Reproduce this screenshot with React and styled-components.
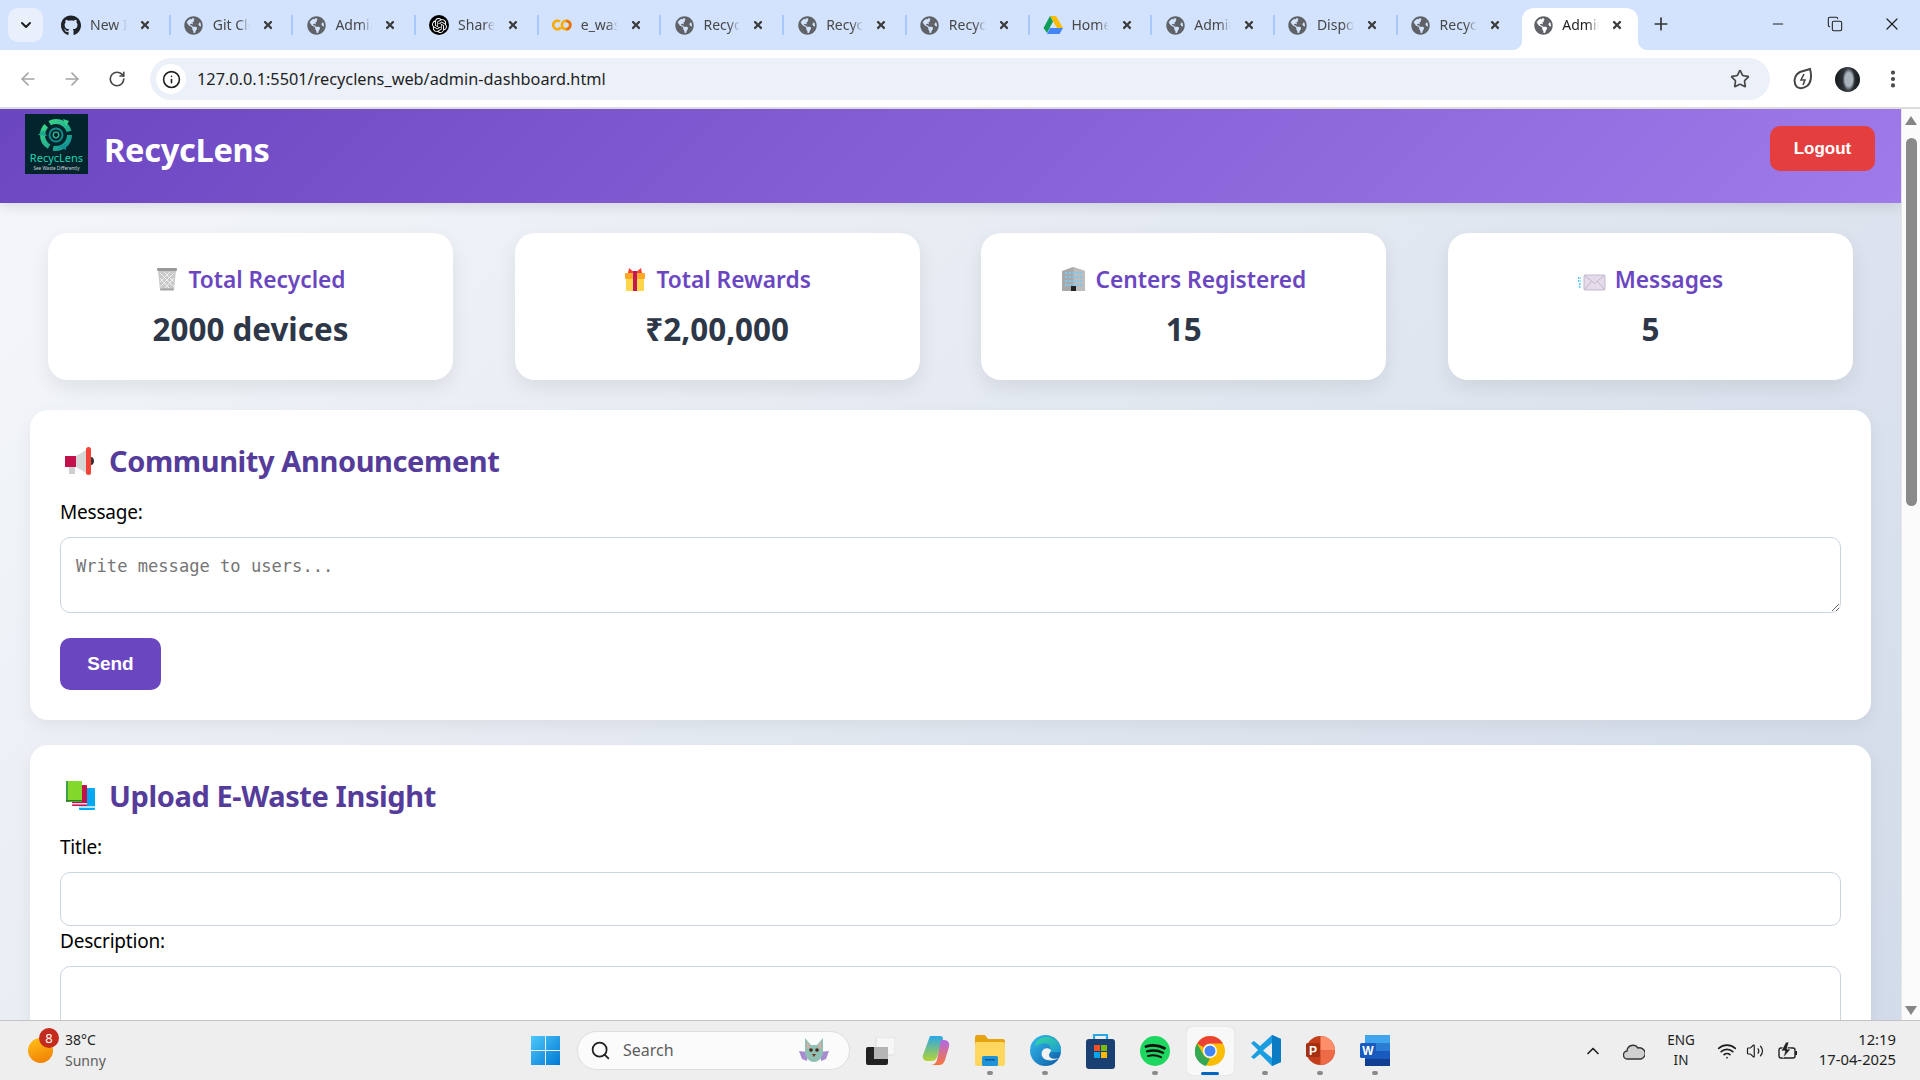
import styled, { createGlobalStyle } from "styled-components";
import { FaGithub, FaGlobeAmericas, FaTimes } from "react-icons/fa";
import { SiOpenai } from "react-icons/si";
import {
  Minus,
  Copy,
  X,
  Plus,
  Info,
  Star,
  ChevronDown,
  ChevronUp,
  Search as SearchGlyph,
  EllipsisVertical,
  Wifi,
  Volume2,
  ArrowLeft,
  ArrowRight,
  RotateCw,
} from "lucide-react";

const GlobalStyle = createGlobalStyle`
  html, body {
    margin: 0;
    padding: 0;
    height: 100%;
    overflow: hidden;
  }
  * {
    box-sizing: border-box;
  }
`;

const uiFont = `"Noto Sans", "Open Sans", sans-serif`;

// Browser frame
const Screen = styled.div`
  display: flex;
  flex-direction: column;
  width: 1920px;
  height: 1080px;
  overflow: hidden;
  font-family: ${uiFont};
`;

const TabStrip = styled.div`
  display: flex;
  align-items: flex-start;
  height: 50px;
  flex-shrink: 0;
  background: #d3e3fd;
`;

const TabMenu = styled.div`
  display: flex;
  align-items: center;
  justify-content: center;
  width: 35px;
  height: 34px;
  margin: 8px 4px 0 8px;
  border-radius: 10px;
  background: #e9f0fc;
  color: #1f1f1f;
`;

const Tab = styled.div`
  position: relative;
  display: flex;
  align-items: center;
  width: 122.7px;
  height: 42px;
  margin-top: 8px;
  padding-left: 14px;
  color: ${(p) => (p.$active ? "#1f1f1f" : "#474747")};
  background: ${(p) => (p.$active ? "#ffffff" : "transparent")};
  border-radius: 12px 12px 0 0;
  ${(p) => p.$active && "width: 116px; margin-left: 3px; padding-left: 11px;"}

  &::before {
    content: "";
    display: ${(p) => (p.$divider ? "block" : "none")};
    position: absolute;
    left: -1px;
    top: 7px;
    width: 2px;
    height: 20px;
    background: #a8c7fa;
  }
`;

const Flare = styled.span`
  position: absolute;
  bottom: 0;
  ${(p) => (p.$side === "left" ? "left: -10px;" : "right: -10px;")}
  width: 10px;
  height: 10px;
  background: radial-gradient(
    circle at ${(p) => (p.$side === "left" ? "0 0" : "100% 0")},
    transparent 10px,
    #ffffff 10.5px
  );
`;

const TabIcon = styled.span`
  display: flex;
  align-items: center;
  justify-content: center;
  width: 20px;
  height: 20px;
  flex-shrink: 0;
  margin-bottom: 8px;
  color: #5f6368;
`;

const OpenAiBadge = styled.span`
  display: flex;
  align-items: center;
  justify-content: center;
  width: 20px;
  height: 20px;
  border-radius: 50%;
  background: #000000;
  color: #ffffff;
`;

const TabTitle = styled.span`
  width: 37px;
  margin: 0 0 8px 9px;
  font-size: 14px;
  line-height: 20px;
  white-space: nowrap;
  overflow: hidden;
  -webkit-mask-image: linear-gradient(90deg, #000 70%, transparent);
  mask-image: linear-gradient(90deg, #000 70%, transparent);
`;

const TabClose = styled.span`
  display: flex;
  margin: 0 0 8px 12px;
  color: #3c3c3c;
`;

const NewTab = styled.div`
  display: flex;
  margin: 14px 0 0 13px;
  color: #333;
`;

const WindowControls = styled.div`
  display: flex;
  margin-left: auto;
`;

const WindowButton = styled.div`
  display: flex;
  align-items: center;
  justify-content: center;
  width: 57px;
  height: 48px;
  color: #222;
`;

const Toolbar = styled.div`
  display: flex;
  align-items: center;
  height: 59px;
  flex-shrink: 0;
  padding: 1px 0 0 6px;
  background: #ffffff;
  border-bottom: 2px solid #dcdcdc;
  border-radius: 10px 10px 0 0;
`;

const NavButton = styled.div`
  display: flex;
  align-items: center;
  justify-content: center;
  width: ${(p) => p.$width || 44}px;
  color: ${(p) => (p.$muted ? "#a3a5a8" : "#474747")};
`;

const AddressBar = styled.div`
  display: flex;
  align-items: center;
  width: 1620px;
  height: 42px;
  margin: 0 10px 0 10px;
  padding-left: 6px;
  background: #ebf0f9;
  border-radius: 21px;
`;

const InfoBadge = styled.span`
  display: flex;
  align-items: center;
  justify-content: center;
  width: 30px;
  height: 30px;
  border-radius: 50%;
  background: #ffffff;
  color: #1f1f1f;
`;

const UrlText = styled.span`
  margin-left: 11px;
  font-size: 16.3px;
  color: #1f1f1f;
`;

const StarSlot = styled.span`
  display: flex;
  margin-left: auto;
  margin-right: 20px;
  color: #474747;
`;

const ToolButton = styled.div`
  display: flex;
  align-items: center;
  justify-content: center;
  width: 45px;
  color: #474747;
`;

const Avatar = styled.div`
  width: 25px;
  height: 25px;
  border-radius: 50%;
  background: radial-gradient(ellipse 25% 45% at 55% 50%, #a9b3bc 0 60%, transparent 100%),
    linear-gradient(90deg, #15181b, #3a4046 50%, #15181b);
`;

const Viewport = styled.div`
  display: flex;
  height: 911px;
  flex-shrink: 0;
  overflow: hidden;
`;

const Scrollbar = styled.div`
  display: flex;
  flex-direction: column;
  align-items: center;
  width: 19px;
  height: 100%;
  background: #fbfbfb;
  border-left: 1px solid #e6e6e6;
`;

const ScrollArrow = styled.div`
  width: 0;
  height: 0;
  border-left: 6px solid transparent;
  border-right: 6px solid transparent;
  ${(p) =>
    p.$down
      ? "border-top: 9px solid #858585; margin-top: auto; margin-bottom: 5px;"
      : "border-bottom: 9px solid #858585; margin-top: 7px;"}
`;

const ScrollThumb = styled.div`
  width: 11px;
  height: 368px;
  margin-top: 13px;
  border-radius: 6px;
  background: #8a8a8a;
`;

// Dashboard page
const Page = styled.div`
  flex: 1;
  min-width: 0;
  height: 2150px;
  background: linear-gradient(135deg, #f5f7fa, #c3cfe2);
  font-family: ${uiFont};
`;

const Header = styled.header`
  display: flex;
  align-items: flex-start;
  justify-content: space-between;
  height: 94px;
  padding: 5px 26px 0 25px;
  background: linear-gradient(135deg, #6b46c1, #9f7aea);
  box-shadow: 0 4px 12px rgba(0, 0, 0, 0.1);
`;

const Brand = styled.div`
  display: flex;
  align-items: flex-start;
`;

const Logo = styled.svg`
  display: block;
  width: 63px;
  height: 60px;
`;

const BrandName = styled.h1`
  margin: 14px 0 0 16px;
  font-size: 32.6px;
  line-height: 44px;
  font-weight: 700;
  color: #ffffff;
  letter-spacing: -0.3px;
`;

const LogoutButton = styled.button`
  width: 105px;
  height: 45px;
  margin-top: 12px;
  border: none;
  border-radius: 10px;
  background: #e53e3e;
  color: #ffffff;
  font-family: "Liberation Sans", Arial, sans-serif;
  font-size: 17px;
  font-weight: 700;
`;

const StatsRow = styled.div`
  display: grid;
  grid-template-columns: repeat(4, 405px);
  justify-content: space-between;
  padding: 30px 48px 0;
`;

const StatCard = styled.div`
  height: 147px;
  padding-top: 28px;
  background: #ffffff;
  border-radius: 20px;
  box-shadow: 0 8px 20px rgba(0, 0, 0, 0.08);
  text-align: center;
`;

const StatTitle = styled.div`
  display: flex;
  align-items: center;
  justify-content: center;
  gap: 9px;
  height: 36px;
  font-size: 22.7px;
  font-weight: 600;
  color: #6b46c1;
`;

const StatValue = styled.div`
  margin-top: 12px;
  font-size: 31.4px;
  line-height: 40px;
  font-weight: 700;
  color: #2d3748;
`;

const Section = styled.section`
  margin: ${(p) => (p.$first ? "30px" : "25px")} 30px 0;
  padding: 32px 30px 30px;
  background: #ffffff;
  border-radius: 18px;
  box-shadow: 0 6px 18px rgba(0, 0, 0, 0.06);
`;

const SectionTitle = styled.h2`
  display: flex;
  align-items: center;
  gap: 14px;
  height: 40px;
  margin: 0 0 17px;
  padding: 0 0 3px 5px;
  font-size: 29px;
  font-weight: 700;
  color: #553c9a;
  letter-spacing: -0.4px;
`;

const FieldLabel = styled.label`
  display: block;
  margin-top: ${(p) => p.$gap || 0}px;
  font-size: 19px;
  line-height: 26px;
  color: #000000;
  letter-spacing: -0.2px;
`;

const MessageBox = styled.textarea`
  display: block;
  width: 100%;
  height: ${(p) => p.$height}px;
  margin-top: 12px;
  padding: 18px 15px 10px;
  border: 1px solid #cbd5e0;
  border-radius: 10px;
  background: #ffffff;
  font-family: "DejaVu Sans Mono", monospace;
  font-size: 17.1px;
  outline: none;

  &::placeholder {
    color: #757575;
  }
`;

const TextField = styled.input`
  display: block;
  width: 100%;
  height: 54px;
  margin-top: 12px;
  border: 1px solid #cbd5e0;
  border-radius: 10px;
  background: #ffffff;
`;

const SendButton = styled.button`
  display: block;
  width: 101px;
  height: 52px;
  margin-top: 25px;
  border: none;
  border-radius: 10px;
  background: #6b46c1;
  color: #ffffff;
  font-family: "Liberation Sans", Arial, sans-serif;
  font-size: 19px;
  font-weight: 700;
`;

// Windows taskbar
const Taskbar = styled.div`
  display: flex;
  align-items: center;
  height: 60px;
  flex-shrink: 0;
  background: #eeeeee;
  border-top: 1px solid #c4c4c4;
  font-family: "Noto Sans", sans-serif;
`;

const WeatherZone = styled.div`
  position: relative;
  display: flex;
  align-items: center;
  width: 517.5px;
  padding-left: 28px;
`;

const SunDot = styled.div`
  width: 25px;
  height: 25px;
  border-radius: 50%;
  background: linear-gradient(160deg, #ffc21a, #f07a00);
`;

const AlertBadge = styled.span`
  position: absolute;
  left: 39px;
  top: -1px;
  width: 20px;
  height: 20px;
  border-radius: 50%;
  background: #c42b1c;
  color: #fff;
  font-size: 13px;
  line-height: 20px;
  text-align: center;
`;

const WeatherText = styled.div`
  margin: 0 0 2px 12px;
  font-size: 14px;
  line-height: 21px;
  color: #1f1f1f;
  span {
    display: block;
    color: #5d5d5d;
  }
`;

const TaskSlot = styled.div`
  position: relative;
  display: flex;
  align-items: center;
  justify-content: center;
  width: 55px;
  height: 48px;

  &::before {
    content: "";
    display: ${(p) => (p.$active ? "block" : "none")};
    position: absolute;
    left: 4px;
    right: 4px;
    top: 0;
    bottom: 0;
    background: #f8f8f8;
    border-radius: 5px;
    box-shadow: 0 0 1px rgba(0, 0, 0, 0.2);
  }

  svg {
    position: relative;
  }
`;

const RunDot = styled.span`
  position: absolute;
  left: 50%;
  bottom: 0;
  width: ${(p) => (p.$active ? "18px" : "6px")};
  height: ${(p) => (p.$active ? "3px" : "4px")};
  margin-left: ${(p) => (p.$active ? "-9px" : "-3px")};
  border-radius: 2px;
  background: ${(p) => (p.$active ? "#0067c0" : "#8a8a8a")};
`;

const SearchPill = styled.div`
  display: flex;
  align-items: center;
  width: 273px;
  height: 39px;
  margin: 0 2.5px 0 4.5px;
  padding: 0 19px 0 12px;
  border: 1px solid #dedede;
  border-radius: 20px;
  background: #fbfbfb;
  color: #1f1f1f;
`;

const SearchLabel = styled.span`
  margin: 0 0 2px 12px;
  font-size: 16px;
  color: #5d5d5d;
`;

const BatSlot = styled.span`
  display: flex;
  margin-left: auto;
`;

const Tray = styled.div`
  display: flex;
  align-items: center;
  margin-left: auto;
  padding-right: 24px;
  color: #1f1f1f;
`;

const TraySlot = styled.div`
  display: flex;
  align-items: center;
  justify-content: center;
  width: ${(p) => p.$width}px;
`;

const LangText = styled.div`
  width: 54px;
  margin-bottom: 1px;
  font-size: 13.5px;
  line-height: 20px;
  text-align: center;
`;

const ClockText = styled.div`
  width: 84px;
  margin-bottom: 3px;
  font-size: 14.8px;
  line-height: 20px;
  text-align: right;
  white-space: nowrap;
`;

// Inline drawings
const ColabIcon = () => (
  <svg width="22" height="14" viewBox="0 0 22 14">
    <circle cx="6" cy="7" r="4.6" fill="none" stroke="#f9ab00" strokeWidth="3" strokeDasharray="21 8" transform="rotate(35 6 7)" />
    <circle cx="15.5" cy="7" r="4.6" fill="none" stroke="#f9ab00" strokeWidth="3" />
    <path d="M15.5 2.4a4.6 4.6 0 0 1 0 9.2" fill="none" stroke="#e8710a" strokeWidth="3" />
  </svg>
);

const DriveIcon = () => (
  <svg width="20" height="18" viewBox="0 0 20 18">
    <path d="M7 0h6l7 12h-6z" fill="#fbbc04" />
    <path d="M7 0l3 5.5L4 17 0.5 12z" fill="#0f9d58" />
    <path d="M4 18l3-6h13l-3.5 6z" fill="#4285f4" />
  </svg>
);

const LogoMark = () => (
  <Logo viewBox="0 0 63 60">
    <defs>
      <linearGradient id="logoRing" x1="0" y1="0" x2="1" y2="1">
        <stop offset="0" stopColor="#3ddc84" />
        <stop offset="1" stopColor="#0f8f95" />
      </linearGradient>
    </defs>
    <rect width="63" height="60" fill="#02242c" />
    <circle cx="31" cy="21" r="13.5" fill="none" stroke="url(#logoRing)" strokeWidth="5" strokeDasharray="24 4.3" />
    <path d="M13 21l5-5 4 6z" fill="#1aa68f" />
    <path d="M38 5l6 2-3 5z" fill="#37d08a" />
    <path d="M41 36l-6-3 6-3z" fill="#118f95" />
    <circle cx="31" cy="21" r="6.5" fill="none" stroke="#0e8c8a" strokeWidth="2" />
    <circle cx="31" cy="21" r="2.8" fill="none" stroke="#38b99a" strokeWidth="1.3" />
    <text x="31.5" y="48" fontSize="11" textAnchor="middle" fill="#22d3b2" fontFamily="Noto Sans, sans-serif">RecycLens</text>
    <text x="31.5" y="56" fontSize="4.6" textAnchor="middle" fill="#cfd8d8" fontFamily="Noto Sans, sans-serif">See Waste Differently</text>
  </Logo>
);

const BasketEmoji = () => (
  <svg width="24" height="24" viewBox="0 0 24 24">
    <path d="M3 3h18l-2 20H5z" fill="#c9c9c9" />
    <path d="M5 6l14 14M9 5l10 10M5 11l9 10M19 6L5 20M15 5L5 15M19 11l-9 10" stroke="#f1f1f1" strokeWidth="1" />
    <rect x="2" y="1" width="20" height="3" rx="1" fill="#9a9a9a" />
    <rect x="5" y="21.5" width="14" height="2" rx="1" fill="#a5a5a5" />
  </svg>
);

const GiftEmoji = () => (
  <svg width="24" height="24" viewBox="0 0 24 24">
    <rect x="3" y="9" width="18" height="15" fill="#ffd54a" />
    <rect x="2" y="6" width="20" height="6" rx="1" fill="#ffa726" />
    <path d="M12 6L6 1l-1 5zM12 6l6-5 1 5z" fill="#f44336" />
    <rect x="10" y="4" width="4" height="20" fill="#c2185b" />
  </svg>
);

const OfficeEmoji = () => (
  <svg width="25" height="24" viewBox="0 0 25 24">
    <path d="M1 4l11-4 12 4v20H1z" fill="#a8a8a8" />
    <path d="M12.5 0l11.5 4v20H12.5z" fill="#bdbdbd" />
    <path d="M4 6h17M4 10h17M4 14h17M4 18h17" stroke="#7cc8f4" strokeWidth="2.2" strokeDasharray="2.4 1.4" />
    <rect x="10" y="19" width="5" height="5" fill="#222" />
  </svg>
);

const MailEmoji = () => (
  <svg width="28" height="24" viewBox="0 0 28 24">
    <path d="M0 11h3M0 14h3M1 17h2M1 20h2" stroke="#29b6f6" strokeWidth="1.4" strokeDasharray="1.5 1" />
    <rect x="6" y="8" width="21" height="15" rx="1" fill="#e4dcea" stroke="#b7aac4" strokeWidth="0.8" />
    <path d="M6.5 8.5l10 8 10-8M6.5 22.5l7-8M26.5 22.5l-7-8" fill="none" stroke="#b7aac4" strokeWidth="0.8" />
  </svg>
);

const MegaphoneEmoji = () => (
  <svg width="30" height="28" viewBox="0 0 30 28">
    <rect x="4" y="19" width="6" height="8" fill="#cfcfcf" />
    <path d="M0 9h11v11H0z" fill="#c2114b" />
    <path d="M11 9l12-7v25l-12-7z" fill="#d6d6d6" />
    <rect x="21" y="0" width="5" height="28" rx="2.5" fill="#f44336" />
    <path d="M26 10c4 0 4 8 0 8z" fill="#333" />
  </svg>
);

const BooksEmoji = () => (
  <svg width="30" height="29" viewBox="0 0 30 29">
    <rect x="14" y="7" width="16" height="22" rx="1" fill="#03a9f4" />
    <rect x="14" y="25" width="16" height="2" fill="#b3e5fc" />
    <rect x="7" y="4" width="15" height="21" rx="1" fill="#c2114b" />
    <rect x="7" y="22" width="15" height="1.5" fill="#f8d7e0" />
    <rect x="1" y="0" width="16" height="21" rx="1" fill="#82d92b" />
    <rect x="1" y="0" width="2" height="21" fill="#43a047" />
    <rect x="1" y="19" width="16" height="1.5" fill="#2e7d32" />
  </svg>
);

const WindowsLogo = () => (
  <svg width="29" height="29" viewBox="0 0 29 29">
    <defs>
      <linearGradient id="winBlue" x1="0" y1="0" x2="1" y2="1">
        <stop offset="0" stopColor="#4fc8fb" />
        <stop offset="1" stopColor="#0078d4" />
      </linearGradient>
    </defs>
    <path d="M0 0h14v14H0zM15 0h14v14H15zM0 15h14v14H0zM15 15h14v14H15z" fill="url(#winBlue)" />
  </svg>
);

const BatEmoji = () => (
  <svg width="32" height="28" viewBox="0 0 32 28">
    <path d="M1 14l9 1-1 9-5-2zM31 14l-9 1 1 9 5-2z" fill="#a78bcf" />
    <path d="M7 1l6 7h6l6-7v13c0 6-4 11-9 11S7 20 7 14z" fill="#8fc0b4" />
    <path d="M9 4l3 6-3 2zM23 4l-3 6 3 2z" fill="#e6a8a0" />
    <circle cx="13" cy="13" r="1.8" fill="#4a2415" />
    <circle cx="19" cy="13" r="1.8" fill="#4a2415" />
    <path d="M14 17h4l-2 3z" fill="#7b3320" />
  </svg>
);

const TaskViewIcon = () => (
  <svg width="29" height="28" viewBox="0 0 29 28">
    <rect x="10" y="0" width="19" height="18" rx="2" fill="#f6f6f6" stroke="#dcdcdc" />
    <rect x="0" y="10" width="22" height="18" rx="2" fill="#222" />
    <rect x="8" y="10" width="14" height="12" fill="#b5b5b5" />
  </svg>
);

const CopilotIcon = () => (
  <svg width="31" height="31" viewBox="0 0 31 31">
    <defs>
      <linearGradient id="copA" x1="0" y1="0" x2="0" y2="1">
        <stop offset="0" stopColor="#2aa7e8" />
        <stop offset="1" stopColor="#b5d334" />
      </linearGradient>
      <linearGradient id="copB" x1="0" y1="0" x2="0" y2="1">
        <stop offset="0" stopColor="#b06ae8" />
        <stop offset="1" stopColor="#f7743a" />
      </linearGradient>
    </defs>
    <path d="M10 1h10c2 0 3 1 3 3L17 22c-1 3-3 4-6 4H7c-3 0-5-3-4-6z" fill="url(#copA)" />
    <path d="M21 5h3c4 0 6 3 5 7l-4 13c-1 3-3 5-6 5H10c3 0 6-1 7-5z" fill="url(#copB)" />
  </svg>
);

const ExplorerIcon = () => (
  <svg width="30" height="31" viewBox="0 0 30 31">
    <path d="M0 2c0-1 1-2 2-2h8l3 4h15c1 0 2 1 2 2v5H0z" fill="#e8a310" />
    <rect y="7" width="30" height="24" rx="2" fill="#ffd75e" />
    <rect x="7" y="21" width="16" height="10" rx="1.5" fill="#1f93d8" />
    <rect x="10" y="24" width="10" height="1.5" fill="#0b5a94" />
  </svg>
);

const EdgeIcon = () => (
  <svg width="31" height="31" viewBox="0 0 31 31">
    <defs>
      <linearGradient id="edgeA" x1="0" y1="0" x2="1" y2="1">
        <stop offset="0" stopColor="#35c1f1" />
        <stop offset="1" stopColor="#0c59a4" />
      </linearGradient>
      <linearGradient id="edgeB" x1="0" y1="0" x2="1" y2="1">
        <stop offset="0" stopColor="#36d8a0" />
        <stop offset="1" stopColor="#1e9ad6" />
      </linearGradient>
    </defs>
    <circle cx="15.5" cy="15.5" r="15.5" fill="url(#edgeA)" />
    <path d="M31 15c0-7-6-13-14-13C9 2 4 8 6 12c3-4 9-5 13-2 2 2 2 5 0 7h12z" fill="url(#edgeB)" />
    <path d="M14 14c-4 3-3 10 3 11 4 1 9 0 12-2-5 2-10 0-10-3 0-2 2-3 2-5-2-2-5-2-7-1z" fill="#f2f2f2" />
  </svg>
);

const StoreIcon = () => (
  <svg width="29" height="36" viewBox="0 0 29 36">
    <path d="M8 6V2h13v4" fill="none" stroke="#2ba6e0" strokeWidth="2.2" />
    <rect y="6" width="29" height="30" rx="3" fill="#1a3f73" />
    <rect x="8" y="12" width="6" height="6" fill="#f25022" />
    <rect x="15" y="12" width="6" height="6" fill="#7fba00" />
    <rect x="8" y="19" width="6" height="6" fill="#00a4ef" />
    <rect x="15" y="19" width="6" height="6" fill="#ffb900" />
  </svg>
);

const SpotifyIcon = () => (
  <svg width="30" height="30" viewBox="0 0 30 30">
    <circle cx="15" cy="15" r="15" fill="#1ed760" />
    <path d="M6 10.5c6-1.7 13-1.2 18.5 1.7" fill="none" stroke="#111" strokeWidth="2.8" strokeLinecap="round" />
    <path d="M7 15.3c5.5-1.4 11-1 16 1.5" fill="none" stroke="#111" strokeWidth="2.4" strokeLinecap="round" />
    <path d="M8 20c4.5-1.1 9-.8 13 1.2" fill="none" stroke="#111" strokeWidth="2" strokeLinecap="round" />
  </svg>
);

const ChromeIcon = () => (
  <svg width="30" height="30" viewBox="0 0 30 30">
    <circle cx="15" cy="15" r="15" fill="#fbbc04" />
    <path d="M15 0a15 15 0 0 1 13 7.5H15a7.5 7.5 0 0 0-6.5 3.7L2.1 7.5A15 15 0 0 1 15 0z" fill="#ea4335" />
    <path d="M2.1 7.5l6.4 11.2A7.5 7.5 0 0 0 15 22.5L11 30A15 15 0 0 1 2.1 7.5z" fill="#34a853" />
    <circle cx="15" cy="15" r="7" fill="#fff" />
    <circle cx="15" cy="15" r="5.5" fill="#4285f4" />
  </svg>
);

const VsCodeIcon = () => (
  <svg width="31" height="31" viewBox="0 0 31 31">
    <path d="M22 0l9 4v23l-9 4-12-12-6 5-3-2 7-7-7-7 3-2 6 5z" fill="#1b9de2" />
    <path d="M22 8L13 15.5 22 23z" fill="#eeeeee" />
    <path d="M22 0l9 4v23l-9 4z" fill="#0a7cc4" />
  </svg>
);

const PowerPointIcon = () => (
  <svg width="30" height="31" viewBox="0 0 30 31">
    <circle cx="15.5" cy="15.5" r="14.5" fill="#c43e1c" />
    <path d="M15.5 1a14.5 14.5 0 0 1 14.5 14.5H15.5z" fill="#ff8f6b" />
    <path d="M15.5 15.5H30A14.5 14.5 0 0 1 15.5 30z" fill="#ed6c47" />
    <rect x="1" y="8" width="14" height="14" rx="1.5" fill="#a5300f" />
    <text x="8" y="19.5" fontSize="12" fontWeight="700" textAnchor="middle" fill="#fff" fontFamily="Liberation Sans, sans-serif">P</text>
  </svg>
);

const WordIcon = () => (
  <svg width="30" height="31" viewBox="0 0 30 31">
    <rect x="5" width="25" height="8" fill="#41a5ee" />
    <rect x="5" y="8" width="25" height="8" fill="#2b7cd3" />
    <rect x="5" y="16" width="25" height="8" fill="#185abd" />
    <rect x="5" y="24" width="25" height="7" fill="#103f91" />
    <rect y="8" width="16" height="15" rx="1.5" fill="#185abd" />
    <text x="8" y="20" fontSize="12" fontWeight="700" textAnchor="middle" fill="#fff" fontFamily="Liberation Sans, sans-serif">W</text>
  </svg>
);

const CloudIcon = () => (
  <svg width="22" height="18" viewBox="0 0 22 18">
    <path d="M5 17a4 4 0 0 1-1-8 6 6 0 0 1 11-3 5 5 0 0 1 3 11z" fill="#d0d0d0" stroke="#333" strokeWidth="1.4" />
  </svg>
);

const BatteryIcon = () => (
  <svg width="22" height="20" viewBox="0 0 22 20">
    <rect x="2" y="7" width="16" height="10" rx="2" fill="none" stroke="#222" strokeWidth="1.4" />
    <rect x="18" y="10" width="2" height="4" fill="#222" />
    <path d="M9 1L4 10h4l-2 7 8-9h-4l2-7z" fill="#222" stroke="#eee" strokeWidth="0.8" />
  </svg>
);

const GlobeFavicon = () => <FaGlobeAmericas size={19} color="#5f6368" />;

const tabs = [
  { title: "New Issue", icon: <FaGithub size={21} color="#1f2328" /> },
  { title: "Git Clone", icon: <GlobeFavicon /> },
  { title: "Admin Dashboard", icon: <GlobeFavicon /> },
  {
    title: "Shared",
    icon: (
      <OpenAiBadge>
        <SiOpenai size={15} />
      </OpenAiBadge>
    ),
  },
  { title: "e_waste", icon: <ColabIcon /> },
  { title: "RecycLens", icon: <GlobeFavicon /> },
  { title: "RecycLens", icon: <GlobeFavicon /> },
  { title: "RecycLens", icon: <GlobeFavicon /> },
  { title: "Home", icon: <DriveIcon /> },
  { title: "Admin", icon: <GlobeFavicon /> },
  { title: "Dispose", icon: <GlobeFavicon /> },
  { title: "RecycLens", icon: <GlobeFavicon /> },
  { title: "Admin", icon: <GlobeFavicon />, active: true },
];

const stats = [
  { title: "Total Recycled", value: "2000 devices", icon: <BasketEmoji /> },
  { title: "Total Rewards", value: "₹2,00,000", icon: <GiftEmoji /> },
  { title: "Centers Registered", value: "15", icon: <OfficeEmoji /> },
  { title: "Messages", value: "5", icon: <MailEmoji /> },
];

const taskApps = [
  { icon: <TaskViewIcon /> },
  { icon: <CopilotIcon /> },
  { icon: <ExplorerIcon />, dot: true },
  { icon: <EdgeIcon />, dot: true },
  { icon: <StoreIcon /> },
  { icon: <SpotifyIcon />, dot: true },
  { icon: <ChromeIcon />, dot: true, active: true },
  { icon: <VsCodeIcon />, dot: true },
  { icon: <PowerPointIcon />, dot: true },
  { icon: <WordIcon />, dot: true },
];

const App = () => {
  return (
    <Screen>
      <GlobalStyle />

      <TabStrip>
        <TabMenu>
          <ChevronDown size={16} strokeWidth={3} />
        </TabMenu>
        {tabs.map((tab, i) => (
          <Tab key={i} $active={tab.active} $divider={i > 0 && !tab.active}>
            {tab.active && <Flare $side="left" />}
            {tab.active && <Flare $side="right" />}
            <TabIcon>{tab.icon}</TabIcon>
            <TabTitle>{tab.title}</TabTitle>
            <TabClose>
              <FaTimes size={12} />
            </TabClose>
          </Tab>
        ))}
        <NewTab>
          <Plus size={20} strokeWidth={2} />
        </NewTab>
        <WindowControls>
          <WindowButton>
            <Minus size={16} strokeWidth={1.6} />
          </WindowButton>
          <WindowButton>
            <Copy size={16} strokeWidth={1.6} />
          </WindowButton>
          <WindowButton>
            <X size={20} strokeWidth={1.5} />
          </WindowButton>
        </WindowControls>
      </TabStrip>

      <Toolbar>
        <NavButton $muted>
          <ArrowLeft size={20} strokeWidth={2} />
        </NavButton>
        <NavButton $muted>
          <ArrowRight size={20} strokeWidth={2} />
        </NavButton>
        <NavButton $width={46}>
          <RotateCw size={18} strokeWidth={2.2} />
        </NavButton>
        <AddressBar>
          <InfoBadge>
            <Info size={19} strokeWidth={2} />
          </InfoBadge>
          <UrlText>127.0.0.1:5501/recyclens_web/admin-dashboard.html</UrlText>
          <StarSlot>
            <Star size={20} strokeWidth={2} />
          </StarSlot>
        </AddressBar>
        <ToolButton>
          <svg width="22" height="24" viewBox="0 0 22 24" fill="none" stroke="#474747" strokeWidth="2">
            <path d="M5 20c-4-4-3-12 3-15l10-3c2 7 1 14-3 17-3 2-7 3-10 1z" />
            <path d="M12 7l-3 6h4l-2 5" strokeWidth="1.6" />
          </svg>
        </ToolButton>
        <ToolButton>
          <Avatar />
        </ToolButton>
        <ToolButton>
          <EllipsisVertical size={22} strokeWidth={2.6} />
        </ToolButton>
      </Toolbar>

      <Viewport>
        <Page>
          <Header>
            <Brand>
              <LogoMark />
              <BrandName>RecycLens</BrandName>
            </Brand>
            <LogoutButton>Logout</LogoutButton>
          </Header>

          <StatsRow>
            {stats.map((stat) => (
              <StatCard key={stat.title}>
                <StatTitle>
                  {stat.icon}
                  {stat.title}
                </StatTitle>
                <StatValue>{stat.value}</StatValue>
              </StatCard>
            ))}
          </StatsRow>

          <Section $first>
            <SectionTitle>
              <MegaphoneEmoji />
              Community Announcement
            </SectionTitle>
            <FieldLabel>Message:</FieldLabel>
            <MessageBox $height={76} placeholder="Write message to users..." />
            <SendButton>Send</SendButton>
          </Section>

          <Section>
            <SectionTitle>
              <BooksEmoji />
              Upload E-Waste Insight
            </SectionTitle>
            <FieldLabel>Title:</FieldLabel>
            <TextField />
            <FieldLabel $gap={2}>Description:</FieldLabel>
            <MessageBox $height={120} />
          </Section>
        </Page>

        <Scrollbar>
          <ScrollArrow />
          <ScrollThumb />
          <ScrollArrow $down />
        </Scrollbar>
      </Viewport>

      <Taskbar>
        <WeatherZone>
          <SunDot />
          <AlertBadge>8</AlertBadge>
          <WeatherText>
            38°C
            <span>Sunny</span>
          </WeatherText>
        </WeatherZone>
        <TaskSlot>
          <WindowsLogo />
        </TaskSlot>
        <SearchPill>
          <SearchGlyph size={21} strokeWidth={2} />
          <SearchLabel>Search</SearchLabel>
          <BatSlot>
            <BatEmoji />
          </BatSlot>
        </SearchPill>
        {taskApps.map((app, i) => (
          <TaskSlot key={i} $active={app.active}>
            {app.icon}
            {app.dot && <RunDot $active={app.active} />}
          </TaskSlot>
        ))}
        <Tray>
          <TraySlot $width={40}>
            <ChevronUp size={20} strokeWidth={2} />
          </TraySlot>
          <TraySlot $width={41}>
            <CloudIcon />
          </TraySlot>
          <LangText>
            ENG
            <br />
            IN
          </LangText>
          <TraySlot $width={38}>
            <Wifi size={20} strokeWidth={2} />
          </TraySlot>
          <TraySlot $width={18}>
            <Volume2 size={20} strokeWidth={1.6} />
          </TraySlot>
          <TraySlot $width={48}>
            <BatteryIcon />
          </TraySlot>
          <ClockText>
            12:19
            <br />
            17-04-2025
          </ClockText>
        </Tray>
      </Taskbar>
    </Screen>
  );
};

export default App;
